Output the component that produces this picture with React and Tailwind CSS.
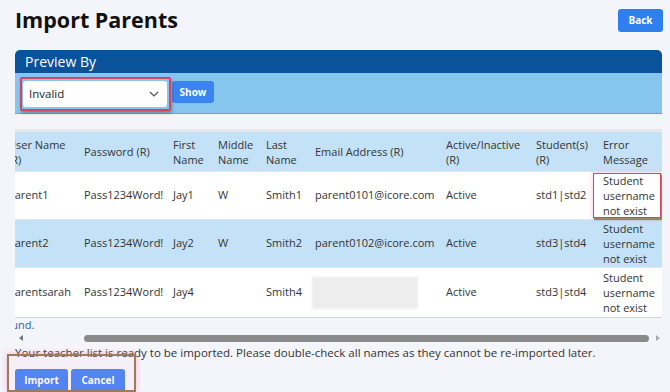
import React from "react";

const cols = "grid-cols-[76px_89px_45px_48px_49px_131px_90px_67px_67px]";

function Cell({ children, className = "" }) {
  return <div className={"pl-[8px] pr-[2px] flex items-center " + className}>{children}</div>;
}

function ErrorText() {
  return (
    <div className="leading-[15px]">
      Student<br />username<br />not exist
    </div>
  );
}

export default function App() {
  const rows = [
    { u: "parent1", p: "Pass1234Word!", f: "Jay1", m: "W", l: "Smith1", e: "parent0101@icore.com", a: "Active", s: "std1|std2", bg: "bg-white", h: "h-[48px]", box: true },
    { u: "parent2", p: "Pass1234Word!", f: "Jay2", m: "W", l: "Smith2", e: "parent0102@icore.com", a: "Active", s: "std3|std4", bg: "bg-[#c4e2f7]", h: "h-[48px]" },
    { u: "parentsarah", p: "Pass1234Word!", f: "Jay4", m: "", l: "Smith4", e: null, a: "Active", s: "std3|std4", bg: "bg-white", h: "h-[50px]" },
  ];
  return (
    <div
      className="relative w-[670px] h-[392px] overflow-hidden bg-[#f4f5fa] text-[#333]"
      style={{ fontFamily: "'Open Sans', 'Noto Sans', sans-serif" }}
    >
      <div className="pl-[15px] pr-[7px]">
        <div className="flex justify-between items-start">
          <h1 className="text-[21.5px] font-bold leading-[28px] mt-[6px] text-[#111]">Import Parents</h1>
          <button className="mt-[9px] w-[45px] h-[23px] rounded-[3px] bg-[#2f80ee] text-white text-[10px] font-bold">Back</button>
        </div>

        <div className="mt-[16px] w-[647px]">
          <div className="h-[23px] bg-[#0a5299] rounded-t-[5px] text-white text-[14px] leading-[23px] pl-[10px]">Preview By</div>
          <div className="h-[41px] bg-[#85c5ee] border-b border-[#4aaed6] flex items-start pt-[8px] pl-[8px] gap-[5px]">
            <div className="relative w-[144px] h-[26px] bg-white rounded-[3px] flex items-center justify-between pl-[6px] pr-[8px] text-[11.5px] text-[#222]">
              <span>Invalid</span>
              <svg width="10" height="6" viewBox="0 0 10 6" fill="none" stroke="#555" strokeWidth="1.2"><path d="M1 1l4 4 4-4" /></svg>
              <div className="absolute left-[-3px] top-[-4px] w-[151px] h-[34px] border-2 border-[#d8435f] rounded-[2px] shadow-[1px_2px_3px_rgba(60,60,60,0.45)]" />
            </div>
            <button className="w-[42px] h-[22px] bg-[#3a84f1] rounded-[3px] text-white text-[10px] font-bold">Show</button>
          </div>
        </div>

        <div className="mt-[15px] w-[647px] overflow-hidden border-t-[3px] border-[#e6e7ec]">
          <div className="ml-[-15px] w-[662px] text-[11px]">
            <div className={"grid h-[39px] bg-[#c4e2f7] leading-[15px] " + cols}>
              <Cell>User Name<br />(R)</Cell>
              <Cell>Password (R)</Cell>
              <Cell>First<br />Name</Cell>
              <Cell>Middle<br />Name</Cell>
              <Cell>Last<br />Name</Cell>
              <Cell>Email Address (R)</Cell>
              <Cell>Active/Inactive<br />(R)</Cell>
              <Cell>Student(s)<br />(R)</Cell>
              <Cell>Error<br />Message</Cell>
            </div>
            {rows.map((r, i) => (
              <div key={i} className={"grid border-t border-[#e2e6ea] " + cols + " " + r.bg + " " + r.h}>
                <Cell>{r.u}</Cell>
                <Cell>{r.p}</Cell>
                <Cell>{r.f}</Cell>
                <Cell>{r.m}</Cell>
                <Cell>{r.l}</Cell>
                <Cell>
                  {r.e ? r.e : <div className="ml-[-3px] w-[106px] h-[32px] bg-[#ededed] blur-[1px]" />}
                </Cell>
                <Cell>{r.a}</Cell>
                <Cell>{r.s}</Cell>
                <Cell className="relative">
                  <ErrorText />
                  {r.box && (
                    <div className="absolute left-[-2px] right-[1px] top-[1px] bottom-[1px] border-[1.5px] border-[#df4157] shadow-[1px_2px_1px_rgba(130,100,50,0.75),0_0_6px_rgba(255,160,200,0.6)]" />
                  )}
                </Cell>
              </div>
            ))}
            <div className="border-t border-[#d4d6da]" />
          </div>
          <div className="h-[14px] text-[11px] leading-[14px] text-[#2d5fa3] ml-[-14px]">found.</div>
          <div className="h-[12px] flex items-center">
            <svg width="8" height="8" viewBox="0 0 8 8" className="ml-[3px]"><path d="M5 1L1 4l4 3z" fill="#777" /></svg>
            <div className="ml-[58px] w-[568px] h-[7px] rounded-full bg-[#8a8a8a]" />
            <svg width="8" height="8" viewBox="0 0 8 8" className="ml-[5px]"><path d="M2 1l4 3-4 3z" fill="#aaa" /></svg>
          </div>
        </div>
        <div className="text-[11.5px] leading-[14px] text-[#333] mt-[2px] whitespace-nowrap">
          Your teacher list is ready to be imported. Please double-check all names as they cannot be re-imported later.
        </div>
        <div className="flex gap-[3px] mt-[9px]">
          <button className="w-[53px] h-[23px] rounded-[3px] bg-[#3d7cf2] text-white text-[10px] font-bold shadow-[0_1px_0_#c060c0]">Import</button>
          <button className="w-[54px] h-[23px] rounded-[3px] bg-[#3d7cf2] text-white text-[10px] font-bold shadow-[0_1px_0_#c060c0]">Cancel</button>
        </div>
      </div>
      <div className="absolute left-[7px] top-[354px] w-[129px] h-[38px] border-2 border-[#9c7a5c] shadow-[0_0_6px_rgba(255,140,200,0.6)] bg-[rgba(255,200,230,0.12)] pointer-events-none" />
    </div>
  );
}
